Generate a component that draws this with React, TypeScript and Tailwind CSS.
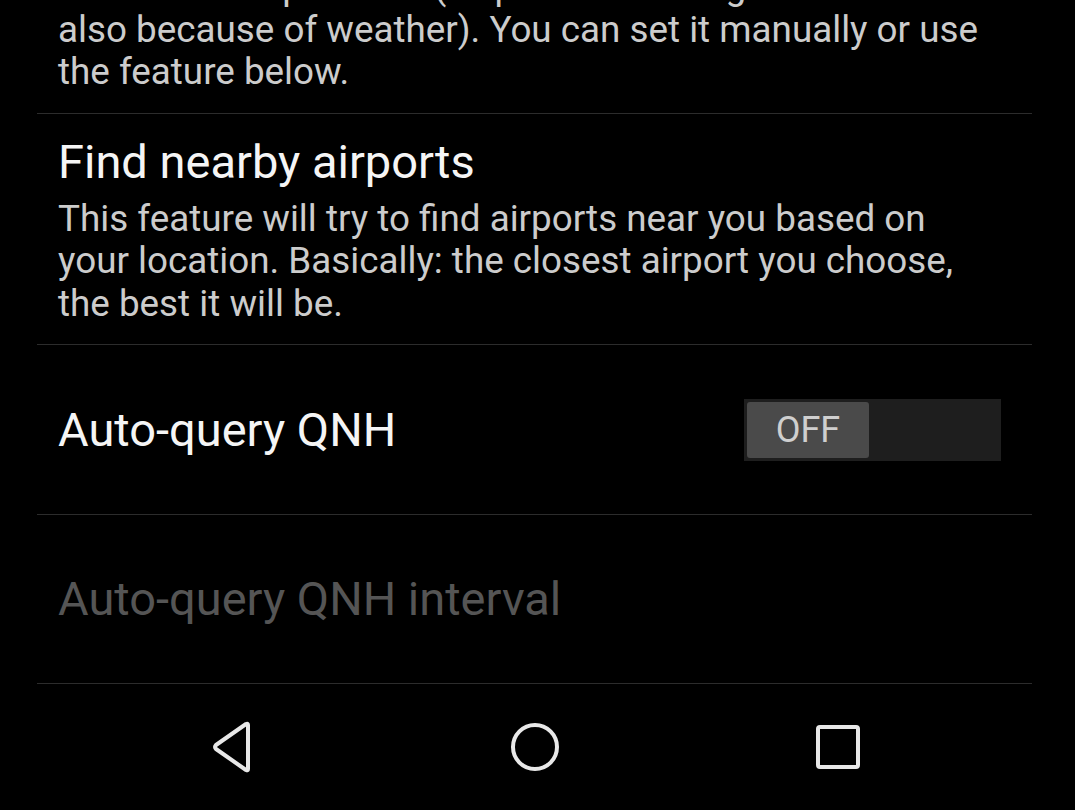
import React from "react";

export default function App() {
  return (
    <div className="w-[1075px] h-[810px] bg-black overflow-hidden flex flex-col" style={{ fontFamily: "Roboto, 'Noto Sans', sans-serif" }}>
      <div className="flex-1 flex flex-col pl-[37px] pr-[43px]">
        <div className="mt-[-34px] pb-[19px] pl-[21px] border-b border-[#2c2c2c]">
          <p className="text-[36.8px] leading-[42.5px] text-[#cccccc] whitespace-nowrap">
            the reference pressure (as pressure changes
            <br />
            also because of weather). You can set it manually or use
            <br />
            the feature below.
          </p>
        </div>
        <div className="pt-[20px] pb-[19px] pl-[21px] border-b border-[#2c2c2c]">
          <div className="text-[47px] leading-[56px] text-[#f5f5f5]">Find nearby airports</div>
          <p className="mt-[8px] text-[36.8px] leading-[42.5px] text-[#cccccc] whitespace-nowrap">
            This feature will try to find airports near you based on
            <br />
            your location. Basically: the closest airport you choose,
            <br />
            the best it will be.
          </p>
        </div>
        <div className="h-[170px] flex items-center justify-between pl-[21px] pr-[31px] border-b border-[#2c2c2c]">
          <div className="text-[47px] leading-[56px] text-[#f5f5f5]">Auto-query QNH</div>
          <div className="w-[257px] h-[62px] bg-[#1e1e1e] p-[3px] flex">
            <div className="w-[122px] h-full bg-[#4a4a4a] rounded-[3px] flex items-center justify-center text-[36px] text-[#cfcfcf]">
              OFF
            </div>
          </div>
        </div>
        <div className="h-[169px] flex items-center pl-[21px] border-b border-[#2c2c2c]">
          <div className="text-[47px] leading-[56px] text-[#555555]">Auto-query QNH interval</div>
        </div>
      </div>
      <div className="h-[126px] flex items-center justify-center pr-[5px]">
        <div className="w-[303px] flex justify-center pl-[4px]">
          <svg width="48" height="52" viewBox="0 0 48 52">
            <path d="M38 4 L38 48 Q38 50 36 49 L6 28 Q4 26 6 24 L36 3 Q38 2 38 4 Z" fill="none" stroke="#e8e8e8" strokeWidth="4" strokeLinejoin="round" />
          </svg>
        </div>
        <div className="w-[303px] flex justify-center">
          <svg width="52" height="52" viewBox="0 0 52 52">
            <circle cx="26" cy="26" r="22" fill="none" stroke="#e8e8e8" strokeWidth="4" />
          </svg>
        </div>
        <div className="w-[303px] flex justify-center">
          <svg width="46" height="46" viewBox="0 0 46 46">
            <rect x="3" y="3" width="40" height="40" rx="2" fill="none" stroke="#e8e8e8" strokeWidth="4" />
          </svg>
        </div>
      </div>
    </div>
  );
}
